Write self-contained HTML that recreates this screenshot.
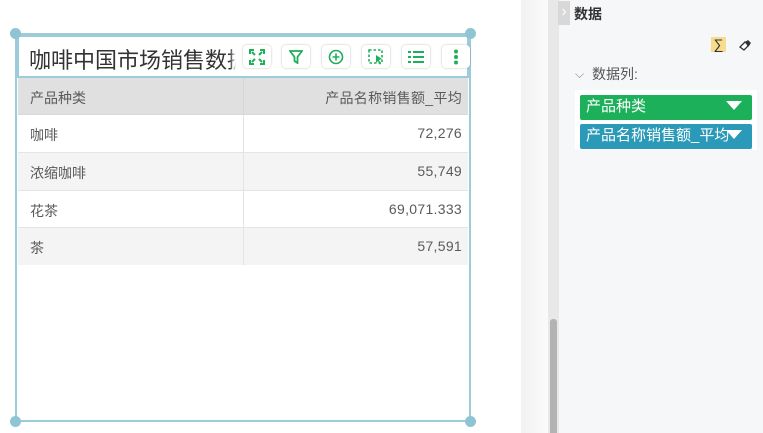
<!DOCTYPE html>
<html><head><meta charset="utf-8"><style>
*{margin:0;padding:0;box-sizing:border-box}
body{width:763px;height:433px;overflow:hidden;background:#fff;font-family:"Liberation Sans","Noto Sans CJK SC",sans-serif;position:relative}
.abs{position:absolute}
.h{position:absolute;width:11px;height:11px;border-radius:50%;background:#8fc4d4}
.btn{position:absolute;top:45px;width:28px;height:23px;background:#fff;border-radius:4px;display:flex;align-items:center;justify-content:center;box-shadow:0 0 2px rgba(0,0,0,0.25)}
.row{position:absolute;left:18px;width:450px;height:38px;border-bottom:1px solid #e4e4e4;font-size:14px;color:#5a5a5a}
.row span{position:absolute;top:10px}
.row .l{left:12px}.row .r{right:6px;letter-spacing:0.3px}
.row .d{position:absolute;left:225px;top:0;bottom:0;width:1px;background:#e4e4e4}
</style></head><body>
<div class="abs" style="left:521px;top:0;width:27px;height:433px;background:linear-gradient(90deg,#f2f2f2,#fafafa)"></div>
<div class="abs" style="left:548px;top:0;width:11px;height:433px;background:#e8e8e8"></div>
<div class="abs" style="left:550px;top:319px;width:7px;height:114px;background:#b3b3b3;border-radius:3px 3px 0 0"></div>
<div class="abs" style="left:559px;top:0;width:204px;height:433px;background:#f6f7f9"></div>
<div class="abs" style="left:558px;top:1px;width:12px;height:24px;background:#d8d8d8;color:#fff;font-size:16px;line-height:22px;text-align:center">›</div>
<div class="abs" style="left:574px;top:4px;font-size:14px;color:#333;font-weight:bold">数据</div>
<div class="abs" style="left:711px;top:37px;width:15px;height:15px;background:#f6dc8c;font-size:14px;line-height:15px;text-align:center;color:#333">∑</div>
<svg class="abs" style="left:738px;top:39px" width="14" height="12"><path d="M2 8 L7 3 L11 6 L6 11 Z" fill="#fff" stroke="#333" stroke-width="1.3"/><path d="M7 3 L10 1 L13 4 L10 8 Z" fill="#333"/></svg>
<div class="abs" style="left:575px;top:67px;font-size:12px;color:#888">⌵</div>
<div class="abs" style="left:592px;top:64px;font-size:14px;color:#555">数据列:</div>
<div class="abs" style="left:575px;top:90px;width:182px;height:60px;background:#fff"></div>
<div class="abs" style="left:580px;top:95px;width:172px;height:25px;background:#1db05a;border-radius:2px;color:#fff;font-size:15px;line-height:24px;padding-left:6px">产品种类</div>
<div class="abs" style="left:580px;top:124px;width:172px;height:25px;background:#2a9ab8;border-radius:2px;color:#fff;font-size:15px;line-height:24px;padding-left:6px;white-space:nowrap;overflow:hidden">产品名称销售额_平均</div>
<svg class="abs" style="left:726px;top:101px" width="16" height="10"><path d="M0 0H16L8 9Z" fill="#fff"/></svg>
<svg class="abs" style="left:726px;top:130px" width="16" height="10"><path d="M0 0H16L8 9Z" fill="#fff"/></svg>

<div class="abs" style="left:15px;top:33px;width:456px;height:389px;border:2px solid #9ccbd9"></div>
<div class="abs" style="left:17px;top:35px;width:452px;height:43px;border:2px solid #9ccbd9;background:#fff;overflow:hidden">
<div style="position:absolute;left:10px;top:6px;font-size:22px;color:#333;white-space:nowrap">咖啡中国市场销售数据</div></div>
<div class="abs" style="left:230px;top:40px;width:237px;height:35px;background:linear-gradient(90deg,rgba(255,255,255,0),#fff 6px)"></div>
<div class="h" style="left:10px;top:28px"></div><div class="h" style="left:465px;top:28px"></div>
<div class="h" style="left:10px;top:416px"></div><div class="h" style="left:465px;top:416px"></div>
<div class="btn" style="left:243px"><svg width="16" height="16" fill="none" stroke="#1db05a" stroke-width="2"><path d="M1 5V1H5M11 1H15V5M15 11V15H11M5 15H1V11M3 3L6 6M13 3L10 6M13 13L10 10M3 13L6 10"/></svg></div>
<div class="btn" style="left:282px"><svg width="14" height="14" fill="none" stroke="#1db05a" stroke-width="1.8"><path d="M1 1H13L8.5 7V13L5.5 11V7Z"/></svg></div>
<div class="btn" style="left:322px"><svg width="16" height="16" fill="none" stroke="#1db05a" stroke-width="1.6"><circle cx="8" cy="8" r="6.5"/><path d="M8 4.5V11.5M4.5 8H11.5"/></svg></div>
<div class="btn" style="left:362px"><svg width="16" height="16"><rect x="1" y="1" width="13" height="13" fill="none" stroke="#1db05a" stroke-width="1.6" stroke-dasharray="2.5 2"/><path d="M8 6L14 10L11 11L13 15L11.5 15.5L10 12L8 14Z" fill="#1db05a"/></svg></div>
<div class="btn" style="left:402px"><svg width="16" height="12" stroke="#1db05a" stroke-width="2"><path d="M0 1H3M5 1H16M0 6H3M5 6H16M0 11H3M5 11H16"/></svg></div>
<div class="btn" style="left:442px"><svg width="6" height="16" fill="#1db05a"><circle cx="3" cy="2.5" r="2"/><circle cx="3" cy="8" r="2"/><circle cx="3" cy="13.5" r="2"/></svg></div>

<div class="row" style="top:78px;height:37px;background:#e0e0e0;border-bottom:1px solid #d8d8d8"><span class="l">产品种类</span><span class="r">产品名称销售额_平均</span><div class="d" style="background:#d6d6d6"></div></div>
<div class="row" style="top:115px;background:#fff"><span class="l">咖啡</span><span class="r">72,276</span><div class="d"></div></div>
<div class="row" style="top:153px;background:#f4f4f4"><span class="l">浓缩咖啡</span><span class="r">55,749</span><div class="d"></div></div>
<div class="row" style="top:191px;background:#fff;height:37px"><span class="l">花茶</span><span class="r">69,071.333</span><div class="d"></div></div>
<div class="row" style="top:228px;background:#f4f4f4;height:37px;border-bottom:none"><span class="l">茶</span><span class="r">57,591</span><div class="d"></div></div>
</body></html>
